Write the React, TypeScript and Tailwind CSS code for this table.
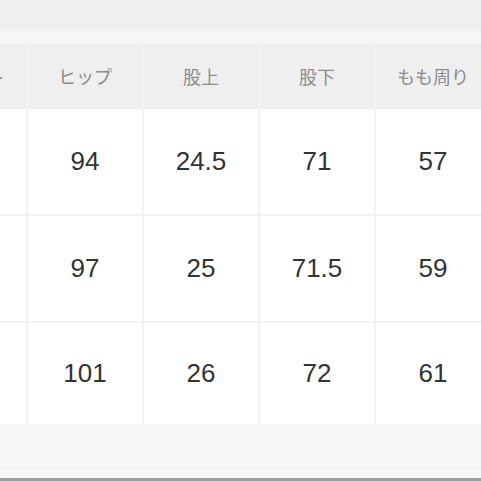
import * as React from "react";

const headers = ["ウエスト", "ヒップ", "股上", "股下", "もも周り"];
const rows = [
  ["76", "94", "24.5", "71", "57"],
  ["80", "97", "25", "71.5", "59"],
  ["84", "101", "26", "72", "61"],
];

export default function App() {
  return (
    <div className="flex h-[481px] w-[481px] flex-col overflow-hidden bg-white">
      <div className="h-[31px] shrink-0 bg-[#efefef]" />
      <div className="h-[13px] shrink-0 bg-[#f6f6f6]" />
      <div className="shrink-0 overflow-hidden">
        <div className="ml-[-88px] flex w-[590px] flex-col">
          <div className="flex h-[65px] bg-[#efefef]">
            {headers.map((h) => (
              <div
                key={h}
                className="flex w-[116px] shrink-0 items-center justify-center border-r-2 border-[#f4f4f4] text-[18px] text-[#8c8c8c] [font-family:'Noto_Sans_CJK_JP',sans-serif]"
              >
                {h}
              </div>
            ))}
          </div>
          {rows.map((r, i) => (
            <div
              key={i}
              className={
                i === rows.length - 1
                  ? "flex h-[101px]"
                  : "flex h-[107px] border-b-2 border-[#f1f1f1]"
              }
            >
              {r.map((v, j) => (
                <div
                  key={j}
                  className="flex w-[116px] shrink-0 items-center justify-center border-r-2 border-[#f1f1f1] text-[26px] text-[#333333] [font-family:'Liberation_Sans',Arial,sans-serif]"
                >
                  {v}
                </div>
              ))}
            </div>
          ))}
        </div>
      </div>
      <div className="h-[44px] shrink-0 bg-[#f6f6f6]" />
      <div className="h-px shrink-0 bg-[#ededed]" />
      <div className="flex-1 bg-[#f8f8f8]" />
      <div className="h-[3px] shrink-0 bg-[#9c9c9c]" />
    </div>
  );
}
